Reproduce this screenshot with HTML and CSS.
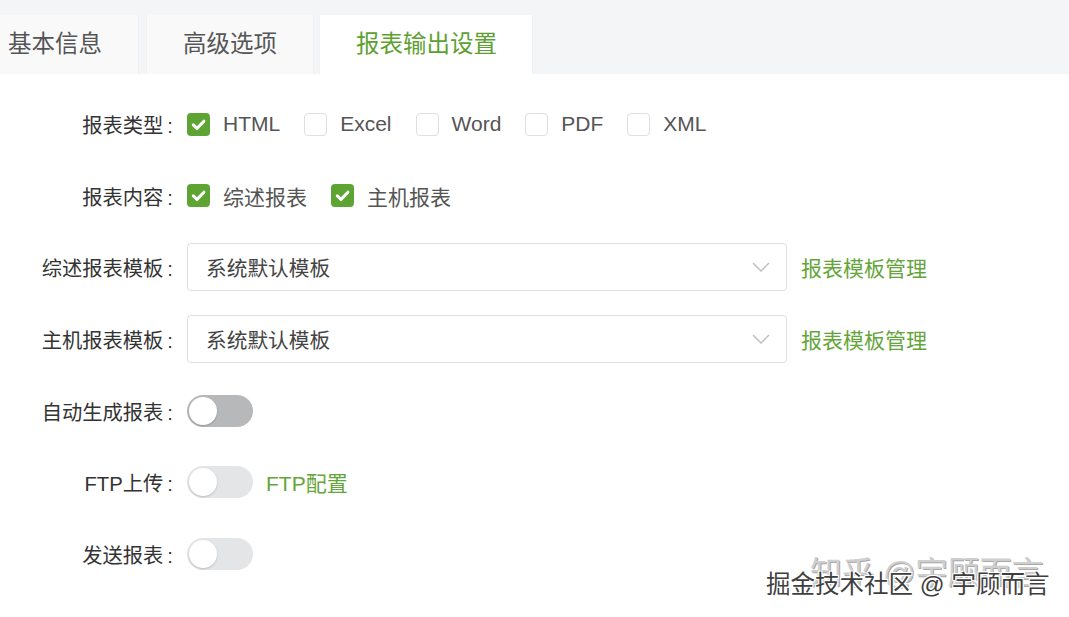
FILE: index.html
```html
<!DOCTYPE html>
<html lang="zh-CN">
<head>
    <meta charset="UTF-8">
    <title>报表输出设置</title>
    <link rel="stylesheet" href="styles.css">
</head>
<body>
    <div class="tabs">
        <div class="tab">基本信息</div>
        <div class="tab">高级选项</div>
        <div class="tab active">报表输出设置</div>
    </div>

    <div class="form">
        <div class="row">
            <div class="label">报表类型<span class="colon">:</span></div>
            <div class="field">
                <label class="check"><span class="box checked"><svg viewBox="0 0 23 23" width="23" height="23"><path d="M6.3 11.8 L10 15.4 L16.9 8.2" fill="none" stroke="#fff" stroke-width="3" stroke-linecap="round" stroke-linejoin="round"/></svg></span>HTML</label>
                <label class="check"><span class="box"></span>Excel</label>
                <label class="check"><span class="box"></span>Word</label>
                <label class="check"><span class="box"></span>PDF</label>
                <label class="check"><span class="box"></span>XML</label>
            </div>
        </div>

        <div class="row">
            <div class="label">报表内容<span class="colon">:</span></div>
            <div class="field">
                <label class="check"><span class="box checked"><svg viewBox="0 0 23 23" width="23" height="23"><path d="M6.3 11.8 L10 15.4 L16.9 8.2" fill="none" stroke="#fff" stroke-width="3" stroke-linecap="round" stroke-linejoin="round"/></svg></span>综述报表</label>
                <label class="check"><span class="box checked"><svg viewBox="0 0 23 23" width="23" height="23"><path d="M6.3 11.8 L10 15.4 L16.9 8.2" fill="none" stroke="#fff" stroke-width="3" stroke-linecap="round" stroke-linejoin="round"/></svg></span>主机报表</label>
            </div>
        </div>

        <div class="row">
            <div class="label">综述报表模板<span class="colon">:</span></div>
            <div class="field">
                <div class="select">
                    <span>系统默认模板</span>
                    <svg viewBox="0 0 18 10" width="18" height="10"><polyline points="1,1 9,9 17,1" fill="none" stroke="#bdbdbd" stroke-width="1.4"/></svg>
                </div>
                <a class="link">报表模板管理</a>
            </div>
        </div>

        <div class="row">
            <div class="label">主机报表模板<span class="colon">:</span></div>
            <div class="field">
                <div class="select">
                    <span>系统默认模板</span>
                    <svg viewBox="0 0 18 10" width="18" height="10"><polyline points="1,1 9,9 17,1" fill="none" stroke="#bdbdbd" stroke-width="1.4"/></svg>
                </div>
                <a class="link">报表模板管理</a>
            </div>
        </div>

        <div class="row">
            <div class="label">自动生成报表<span class="colon">:</span></div>
            <div class="field">
                <span class="switch dark"><span class="knob"></span></span>
            </div>
        </div>

        <div class="row">
            <div class="label">FTP上传<span class="colon">:</span></div>
            <div class="field">
                <span class="switch"><span class="knob"></span></span>
                <a class="link small-gap">FTP配置</a>
            </div>
        </div>

        <div class="row">
            <div class="label">发送报表<span class="colon">:</span></div>
            <div class="field">
                <span class="switch"><span class="knob"></span></span>
            </div>
        </div>
    </div>

    <div class="watermark">
        <div class="wm-back">知乎 @宇顾而言</div>
        <div class="wm-front">掘金技术社区 @ 宇顾而言</div>
    </div>
</body>
</html>
```

FILE: styles.css
```css
body {
    margin: 0;
    background-color: #ffffff;
    font-family: "Liberation Sans", "Noto Sans CJK SC", sans-serif;
    color: #333;
    overflow: hidden;
}
.tabs {
    display: flex;
    gap: 7px;
    height: 74px;
    padding-top: 15px;
    box-sizing: border-box;
    background-color: #f4f5f6;
}
.tab {
    height: 59px;
    line-height: 59px;
    padding: 0 36px;
    font-size: 23.5px;
    color: #555;
    background-color: #f9f9fa;
    border-left: 1px solid #eef0f2;
    border-right: 1px solid #eef0f2;
}
.tab:first-child {
    padding-left: 8px;
    border-left: none;
}
.tab.active {
    margin-left: -2px;
    padding: 0 35px 0 36px;
    background-color: #ffffff;
    color: #5d9f31;
}
.form {
    padding-top: 26px;
}
.row {
    display: flex;
    align-items: center;
    height: 48px;
    margin-bottom: 23.7px;
}
.label {
    width: 178px;
    flex-shrink: 0;
    box-sizing: border-box;
    padding-right: 5px;
    text-align: right;
    font-size: 20.3px;
    color: #333;
}
.colon {
    margin-left: 4px;
}
.field {
    display: flex;
    align-items: center;
    margin-left: 9px;
}
.check {
    display: flex;
    align-items: center;
    margin-right: 24px;
    font-size: 21px;
    color: #555;
}
.box {
    width: 23px;
    height: 23px;
    box-sizing: border-box;
    border: 1px solid #dcdfe3;
    border-radius: 4px;
    margin-right: 13px;
    background-color: #fff;
}
.box.checked {
    border: none;
    background-color: #5ea432;
}
.box svg {
    display: block;
}
.select {
    width: 600px;
    height: 48px;
    box-sizing: border-box;
    border: 1px solid #dcdfe3;
    border-radius: 4px;
    padding: 0 16px 0 18px;
    display: flex;
    justify-content: space-between;
    align-items: center;
    font-size: 20.7px;
    color: #444;
}
.link {
    margin-left: 14px;
    font-size: 21px;
    color: #65a53a;
    cursor: pointer;
}
.link.small-gap {
    margin-left: 13px;
}
.switch {
    width: 66px;
    height: 32px;
    box-sizing: border-box;
    padding: 2px;
    border-radius: 16px;
    background-color: #e4e5e7;
    display: flex;
    align-items: center;
}
.switch.dark {
    background-color: #b7b8ba;
}
.knob {
    width: 28px;
    height: 28px;
    border-radius: 50%;
    background-color: #fff;
    box-shadow: 0 1px 2px rgba(0, 0, 0, 0.18);
}
.watermark {
    position: absolute;
    left: 760px;
    top: 547px;
    width: 300px;
    height: 60px;
}
.wm-back {
    position: absolute;
    left: 50px;
    top: 0;
    font-size: 32px;
    color: #cfcfcf;
    text-shadow: 1px 1px 0 #a8a8a8;
    white-space: nowrap;
}
.wm-front {
    position: absolute;
    left: 6px;
    top: 18px;
    font-size: 24.5px;
    color: #3f3f3f;
    text-shadow: -1px -1px 0 #fff, 1px 1px 0 #fff, 1px -1px 0 #fff, -1px 1px 0 #fff;
    white-space: nowrap;
}
```
